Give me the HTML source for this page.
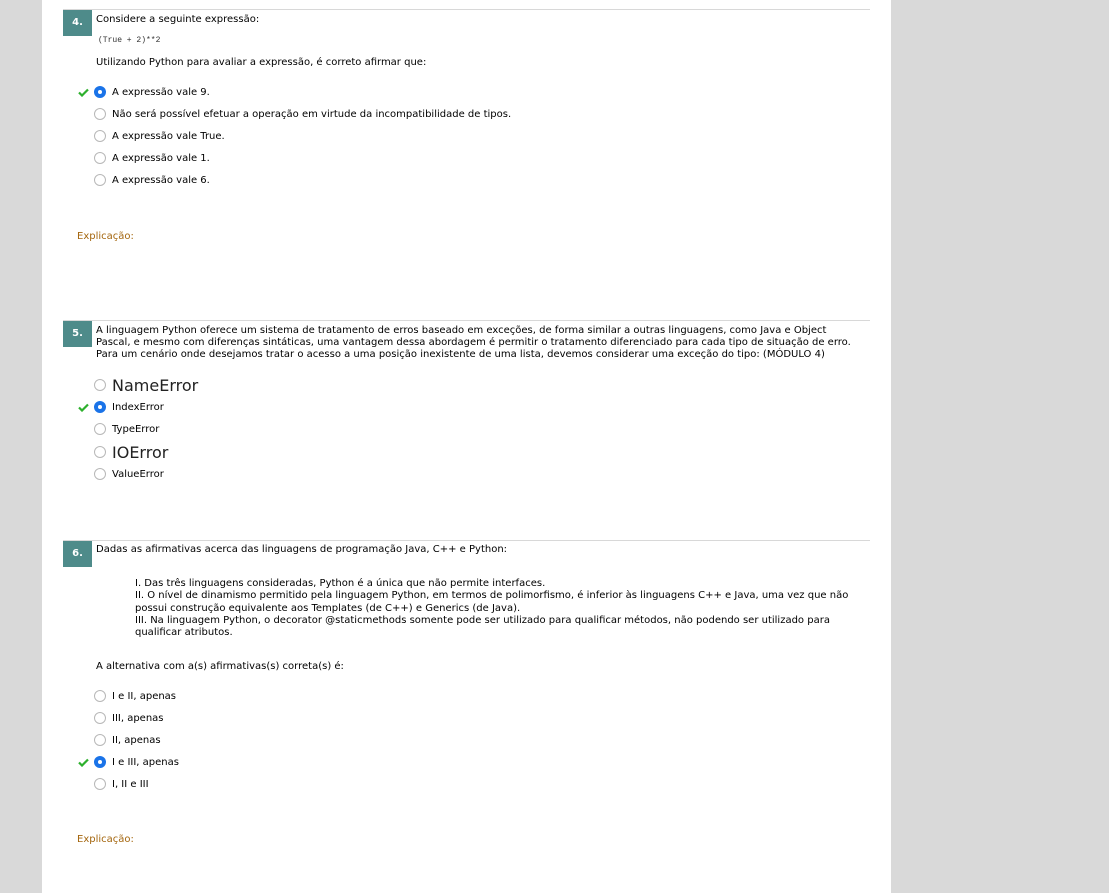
<!DOCTYPE html>
<html><head><meta charset="utf-8"><style>
body{margin:0;width:1109px;height:893px;background:#d9d9d9;position:relative;overflow:hidden;font-family:"DejaVu Sans",Verdana,sans-serif;font-size:10px;color:#000}
.panel{position:absolute;left:42px;top:0;width:849px;height:893px;background:#fff}
.hr{position:absolute;left:63px;width:807px;height:1px;background:#d8d8d8}
.badge{position:absolute;left:63px;width:29px;height:26px;background:#4e8b8a;color:#fff;font-weight:bold;font-size:10px;text-align:center;line-height:26px}
.t{position:absolute;white-space:nowrap;line-height:12px;margin-top:1px}
.r{position:absolute;left:94px;width:12px;height:12px;border:1px solid #b8b8b8;border-radius:50%;box-sizing:border-box;background:#fff;margin-top:0px}
.r.on{border:none;background:#1a73e8}
.r.on:after{content:"";position:absolute;left:4px;top:4px;width:4px;height:4px;border-radius:50%;background:#fff}
.ck{position:absolute;left:78px}
.ex{position:absolute;left:77px;color:#a4660e}
.code{font-family:"Liberation Mono",monospace;font-size:8px;color:#333}
</style></head><body>
<div class="panel"></div>
<div class="hr" style="top:9px"></div>
<div class="badge" style="top:10px">4.</div>
<div class="t" style="left:96px;top:13px">Considere a seguinte expressão:</div>
<div class="t code" style="left:98px;top:34px">(True + 2)**2</div>
<div class="t" style="left:96px;top:56px">Utilizando Python para avaliar a expressão, é correto afirmar que:</div>

<svg class="ck" style="top:88px" width="11" height="9" viewBox="0 0 11 9"><path d="M1 4.5 L4 7.5 L10 1.5" stroke="#2db02d" stroke-width="2.2" fill="none"/></svg>
<div class="r on" style="top:86px"></div><div class="t" style="left:112px;top:86px">A expressão vale 9.</div>
<div class="r" style="top:108px"></div><div class="t" style="left:112px;top:108px">Não será possível efetuar a operação em virtude da incompatibilidade de tipos.</div>
<div class="r" style="top:130px"></div><div class="t" style="left:112px;top:130px">A expressão vale True.</div>
<div class="r" style="top:152px"></div><div class="t" style="left:112px;top:152px">A expressão vale 1.</div>
<div class="r" style="top:174px"></div><div class="t" style="left:112px;top:174px">A expressão vale 6.</div>
<div class="t ex" style="top:230px">Explicação:</div>

<div class="hr" style="top:320px"></div>
<div class="badge" style="top:321px">5.</div>
<div class="t" style="left:96px;top:324px">A linguagem Python oferece um sistema de tratamento de erros baseado em exceções, de forma similar a outras linguagens, como Java e Object<br>Pascal, e mesmo com diferenças sintáticas, uma vantagem dessa abordagem é permitir o tratamento diferenciado para cada tipo de situação de erro.<br>Para um cenário onde desejamos tratar o acesso a uma posição inexistente de uma lista, devemos considerar uma exceção do tipo: (MÓDULO 4)</div>
<div class="r" style="top:379px"></div><div class="t" style="left:112px;top:375px;font-size:16px;line-height:20px;color:#222">NameError</div>
<svg class="ck" style="top:403px" width="11" height="9" viewBox="0 0 11 9"><path d="M1 4.5 L4 7.5 L10 1.5" stroke="#2db02d" stroke-width="2.2" fill="none"/></svg>
<div class="r on" style="top:401px"></div><div class="t" style="left:112px;top:401px">IndexError</div>
<div class="r" style="top:423px"></div><div class="t" style="left:112px;top:423px">TypeError</div>
<div class="r" style="top:446px"></div><div class="t" style="left:112px;top:442px;font-size:16px;line-height:20px;color:#222">IOError</div>
<div class="r" style="top:468px"></div><div class="t" style="left:112px;top:468px">ValueError</div>

<div class="hr" style="top:540px"></div>
<div class="badge" style="top:541px">6.</div>
<div class="t" style="left:96px;top:543px">Dadas as afirmativas acerca das linguagens de programação Java, C++ e Python:</div>
<div class="t" style="left:135px;top:577px;line-height:12.3px">I. Das três linguagens consideradas, Python é a única que não permite interfaces.<br>II. O nível de dinamismo permitido pela linguagem Python, em termos de polimorfismo, é inferior às linguagens C++ e Java, uma vez que não<br>possui construção equivalente aos Templates (de C++) e Generics (de Java).<br>III. Na linguagem Python, o decorator @staticmethods somente pode ser utilizado para qualificar métodos, não podendo ser utilizado para<br>qualificar atributos.</div>
<div class="t" style="left:96px;top:660px">A alternativa com a(s) afirmativas(s) correta(s) é:</div>
<div class="r" style="top:690px"></div><div class="t" style="left:112px;top:690px">I e II, apenas</div>
<div class="r" style="top:712px"></div><div class="t" style="left:112px;top:712px">III, apenas</div>
<div class="r" style="top:734px"></div><div class="t" style="left:112px;top:734px">II, apenas</div>
<svg class="ck" style="top:758px" width="11" height="9" viewBox="0 0 11 9"><path d="M1 4.5 L4 7.5 L10 1.5" stroke="#2db02d" stroke-width="2.2" fill="none"/></svg>
<div class="r on" style="top:756px"></div><div class="t" style="left:112px;top:756px">I e III, apenas</div>
<div class="r" style="top:778px"></div><div class="t" style="left:112px;top:778px">I, II e III</div>
<div class="t ex" style="top:833px">Explicação:</div>
</body></html>
